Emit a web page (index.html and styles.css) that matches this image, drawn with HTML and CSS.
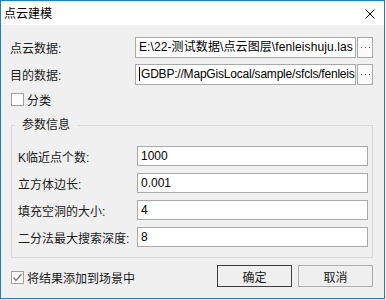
FILE: index.html
```html
<!DOCTYPE html>
<html lang="zh-CN">
<head>
  <meta charset="UTF-8" />
  <title>点云建模</title>
  <link rel="stylesheet" href="styles.css">
</head>
<body>
  <div class="dialog">
    <div class="titlebar">
      <span class="title">点云建模</span>
      <svg class="close" viewBox="0 0 10 10"><path d="M0.5 0.5L9.5 9.5M9.5 0.5L0.5 9.5" stroke="#000" stroke-width="1" fill="none"/></svg>
    </div>

    <div class="content">
      <div class="file-row">
        <span class="file-label">点云数据:</span>
        <div class="path-box">E:\22-测试数据\点云图层\fenleishuju.las</div>
        <button class="browse"><svg viewBox="0 0 9 1"><rect x="0" width="1" height="1"/><rect x="4" width="1" height="1"/><rect x="8" width="1" height="1"/></svg></button>
      </div>
      <div class="file-row">
        <span class="file-label">目的数据:</span>
        <div class="path-box gdb"><span class="caret"></span>GDBP://MapGisLocal/sample/sfcls/fenleishuju</div>
        <button class="browse"><svg viewBox="0 0 9 1"><rect x="0" width="1" height="1"/><rect x="4" width="1" height="1"/><rect x="8" width="1" height="1"/></svg></button>
      </div>

      <label class="check first">
        <span class="box"></span>分类
      </label>

      <fieldset class="group">
        <legend>参数信息</legend>
        <div class="param-row">
          <span class="param-label">K临近点个数:</span>
          <div class="input">1000</div>
        </div>
        <div class="param-row">
          <span class="param-label">立方体边长:</span>
          <div class="input">0.001</div>
        </div>
        <div class="param-row">
          <span class="param-label">填充空洞的大小:</span>
          <div class="input">4</div>
        </div>
        <div class="param-row">
          <span class="param-label">二分法最大搜索深度:</span>
          <div class="input">8</div>
        </div>
      </fieldset>

      <div class="footer">
        <label class="check">
          <span class="box"><svg viewBox="0 0 11 11"><path d="M1.5 5.5L4 8.5L9.5 2" stroke="#777" stroke-width="1.3" fill="none"/></svg></span>将结果添加到场景中
        </label>
        <div class="buttons">
          <button class="btn default">确定</button>
          <button class="btn">取消</button>
        </div>
      </div>
    </div>
  </div>
</body>
</html>
```

FILE: styles.css
```css
body {
  margin: 0;
  background: #fff;
  font-family: "Liberation Sans", "Noto Sans CJK SC", sans-serif;
  font-size: 12px;
  color: #000;
}

.dialog {
  width: 383px;
  height: 297px;
  border: 1px solid #1a7fd4;
  background: #f0f0f0;
  display: flex;
  flex-direction: column;
}

.titlebar {
  height: 24px;
  background: #fff;
  display: flex;
  align-items: center;
  justify-content: space-between;
  padding: 0 9px 0 3px;
}
.title { line-height: 14px; margin-top: 2px; }
.close { width: 10px; height: 10px; margin-top: 2px; }

.content {
  padding: 12px 11px 0 9px;
  display: flex;
  flex-direction: column;
}

.file-row { display: flex; align-items: center; height: 21px; margin-bottom: 6px; }
.file-label { width: 125px; color: #1a1a1a; }
.path-box {
  flex: 1;
  min-width: 0;
  height: 19px;
  line-height: 19px;
  border: 1px solid #a9a9a9;
  background: #fff;
  padding-left: 3px;
  white-space: nowrap;
  overflow: hidden;
  letter-spacing: 0.1px;
}
.path-box.gdb { letter-spacing: -0.2px; }
.caret { display: inline-block; width: 1px; height: 14px; background: #000; vertical-align: -3px; margin-right: 1px; }
.browse {
  width: 16px;
  height: 21px;
  margin-left: 1px;
  padding: 0;
  border: 1px solid #a9a9a9;
  background: #fbfbfb;
  display: flex;
  align-items: center;
  justify-content: center;
}
.browse svg { width: 9px; height: 1px; fill: #555; }

.check { display: flex; align-items: center; gap: 3px; margin-left: 1px; height: 14px; color: #1a1a1a; }
.check.first { margin-top: 1px; }
.box {
  width: 11px;
  height: 11px;
  border: 1px solid #a0a0a0;
  background: #fff;
  display: flex;
}
.box svg { width: 11px; height: 11px; }

.group {
  margin: 12px 0 0 1px;
  padding: 14px 3px 10px 3px;
  border: 1px solid #d9d9d9;
}
.group legend { padding: 0 7px; line-height: 14px; color: #1a1a1a; }

.param-row { display: flex; align-items: center; height: 20px; margin-bottom: 7px; }
.param-row:last-child { margin-bottom: 0; }
.param-label { width: 119px; padding-left: 3px; color: #1a1a1a; }
.input {
  flex: 1;
  height: 18px;
  line-height: 18px;
  border: 1px solid #a9a9a9;
  background: #fff;
  padding-left: 3px;
  margin-right: 1px;
}

.footer { display: flex; align-items: center; justify-content: space-between; margin-top: 7px; }
.footer .check { margin-top: 2px; }
.buttons { display: flex; gap: 6px; }
.btn {
  width: 75px;
  height: 22px;
  padding: 0;
  font: inherit;
  color: #1a1a1a;
  background: #efefef;
  border: 1px solid #adadad;
}
.btn.default { border-color: #3c3c3c; }
```
